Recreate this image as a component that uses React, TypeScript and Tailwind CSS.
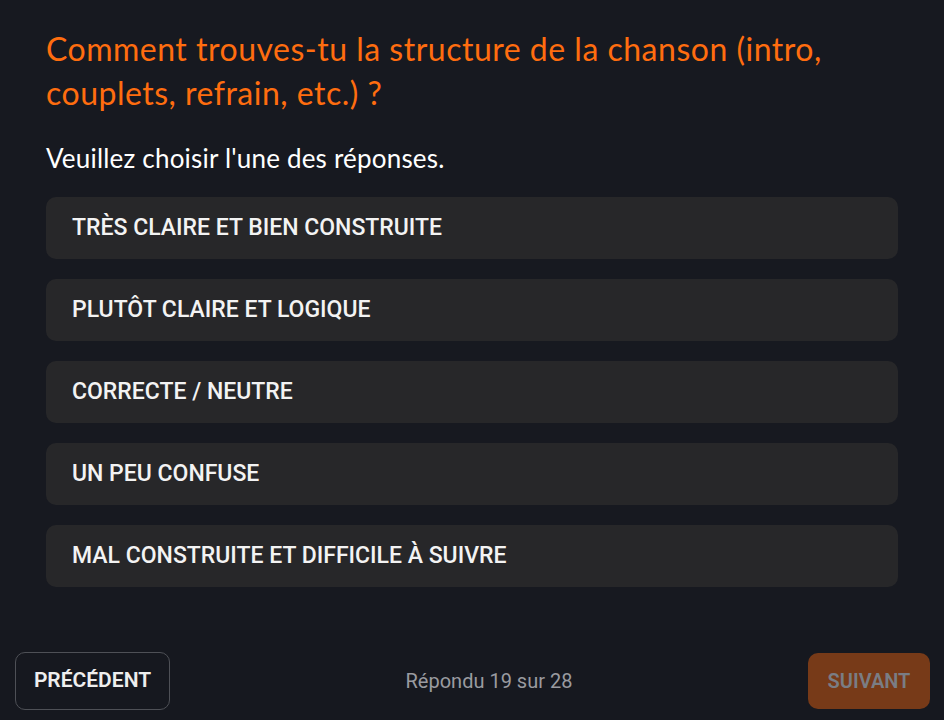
import React from "react";

const options = [
  "TRÈS CLAIRE ET BIEN CONSTRUITE",
  "PLUTÔT CLAIRE ET LOGIQUE",
  "CORRECTE / NEUTRE",
  "UN PEU CONFUSE",
  "MAL CONSTRUITE ET DIFFICILE À SUIVRE",
];

export default function App() {
  return (
    <div className="w-[944px] h-[720px] bg-[#171920] flex flex-col overflow-hidden">
      <div className="flex-1 px-[46px] pt-[27px]">
        <h1 className="text-[32px] leading-[44px] tracking-[0.5px] text-[#ff6d0f] font-['Lato',sans-serif] font-normal">
          Comment trouves-tu la structure de la chanson (intro, couplets, refrain, etc.) ?
        </h1>
        <p className="mt-[27px] text-[26px] leading-[32px] tracking-[0.2px] text-white font-['Lato',sans-serif]">
          Veuillez choisir l'une des réponses.
        </p>
        <div className="mt-[23px] flex flex-col gap-[20px] w-[852px]">
          {options.map((o) => (
            <div
              key={o}
              className="h-[62px] rounded-[10px] bg-[#272729] flex items-center px-[26px] text-[23px] font-medium text-[#f3f3f3] font-['Roboto',sans-serif]"
            >
              {o}
            </div>
          ))}
        </div>
      </div>
      <div className="h-[90px] flex items-start justify-between pl-[15px] pr-[14px] pt-[22px] bg-[#16181f]">
        <button className="w-[155px] h-[58px] rounded-[10px] border border-[#4e5056] text-[21px] font-semibold text-[#eeeeee] font-['Roboto',sans-serif]">
          PRÉCÉDENT
        </button>
        <span className="mt-[16px] text-[20px] leading-[26px] text-[#9a9ba0] font-['Roboto',sans-serif]">
          Répondu 19 sur 28
        </span>
        <button className="mt-[1px] w-[122px] h-[56px] rounded-[10px] bg-[#773a18] text-[20px] font-semibold text-[#7a7d84] font-['Roboto',sans-serif]">
          SUIVANT
        </button>
      </div>
    </div>
  );
}
